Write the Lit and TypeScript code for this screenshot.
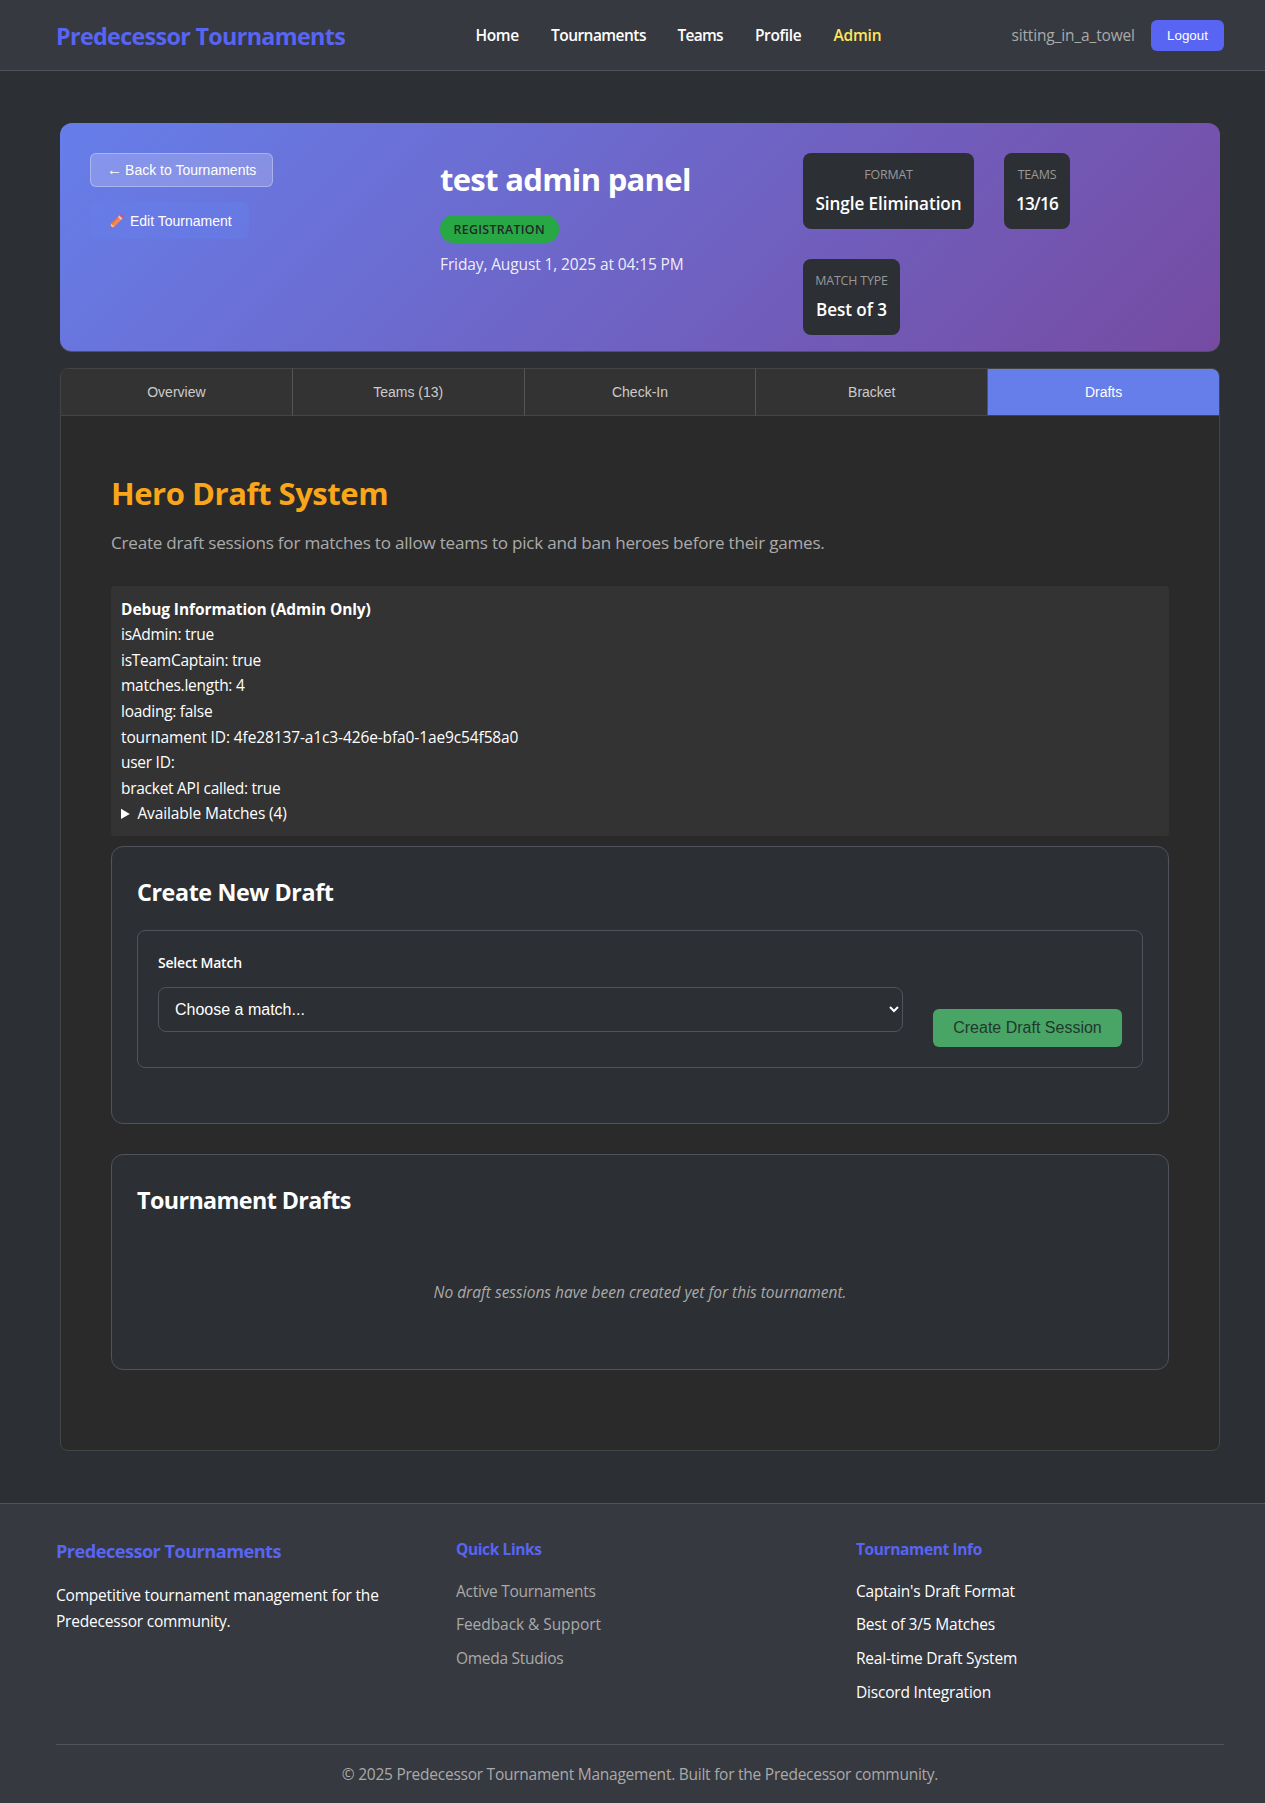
import { LitElement, html, css } from "lit";
import { customElement, state } from "lit/decorators.js";

const base = css`
  * { box-sizing: border-box; }
  :host {
    display: block;
    font-family: "Open Sans", "Noto Sans", sans-serif;
    font-size: 15.5px;
    line-height: 25.6px;
    color: #fff;
  }
  h1, h2, h3, h4, p, ul { margin: 0; padding: 0; }
  button, select { font-family: "Liberation Sans", Arial, sans-serif; }
`;

@customElement("site-header")
class SiteHeader extends LitElement {
  static styles = [base, css`
    .bar {
      height: 71px;
      padding-left: 56px;
      background: #36393f;
      border-bottom: 1px solid #4f545c;
      display: flex;
      align-items: center;
    }
    .brand { width: 419.5px; font-size: 23.3px; font-weight: 700; letter-spacing: -0.66px; color: #5865f2; line-height: 38px; padding-top: 1px; }
    .nav { display: flex; width: 536px; font-weight: 600; padding-top: 2px; }
    .nav a { white-space: nowrap; }
    .home { width: 75.5px; letter-spacing: -0.4px; }
    .tournaments { width: 126.6px; letter-spacing: -0.54px; }
    .teams { width: 77.3px; letter-spacing: -0.75px; }
    .profile { width: 78.5px; letter-spacing: -0.34px; }
    .admin { letter-spacing: -0.18px; color: #fee75c; }
    .user { width: 139.5px; padding-top: 2px; color: #aaa; letter-spacing: -0.15px; }
    .logout {
      width: 73px; height: 31px; margin-top: 1px; padding: 0; border: 0; border-radius: 6px;
      background: #5865f2; color: #fff; font-size: 13.333px; font-weight: 500;
    }
  `];
  render() {
    return html`<header class="bar">
      <div class="brand">Predecessor Tournaments</div>
      <nav class="nav">
        ${["Home", "Tournaments", "Teams", "Profile", "Admin"].map(n => html`<a class=${n.toLowerCase()}>${n}</a>`)}
      </nav>
      <span class="user">sitting_in_a_towel</span>
      <button class="logout">Logout</button>
    </header>`;
  }
}

@customElement("tournament-banner")
class TournamentBanner extends LitElement {
  static styles = [base, css`
    .banner {
      height: 229px;
      padding: 30px;
      border-radius: 12px;
      border-bottom: 1px solid #4f545c;
      background: linear-gradient(135deg, #667eea 0%, #764ba2 100%);
      display: grid;
      grid-template-columns: 350px 363px 387px;
    }
    .actions { display: flex; flex-direction: column; align-items: flex-start; gap: 15px; }
    .actions button { font-size: 14px; color: #fff; border-radius: 6px; padding: 0; white-space: nowrap; }
    .back { width: 183px; height: 34px; background: rgba(255,255,255,.2); border: 1px solid rgba(255,255,255,.3); }
    .arrow { font-size: 15.5px; line-height: 14px; margin-right: -1px; }
    .edit { width: 159px; height: 37px; border: 0; background: rgba(102,126,234,.5); display: flex; align-items: center; }
    .edit svg { width: 14px; height: 14px; margin: 0 6px 0 20px; }
    .title { font-size: 31px; line-height: 51px; letter-spacing: -0.7px; padding-top: 1px; }
    .badge {
      display: block; width: 118.5px; height: 28px; margin-top: 10px; border-radius: 14px; background: #28a745;
      color: #23272a; font-size: 12.4px; font-weight: 600; letter-spacing: .3px; line-height: 29px; text-align: center;
    }
    .date { margin-top: 9px; letter-spacing: -0.12px; color: rgba(255,255,255,.9); }
    .stats { display: flex; flex-wrap: wrap; gap: 30px; align-content: flex-start; }
    .stat { height: 76px; padding-top: 12px; border-radius: 8px; background: #2c2f33; text-align: center; }
    .label { font-size: 12.4px; line-height: 20.5px; letter-spacing: -0.15px; color: #999; }
    .value { margin-top: 4px; font-size: 17.1px; line-height: 28px; font-weight: 600; letter-spacing: -0.07px; }
    .format { width: 171px; }
    .teams { width: 66px; }
    .teams .value { letter-spacing: -0.75px; }
    .match { width: 97px; }
  `];
  render() {
    const stats = [
      ["format", "FORMAT", "Single Elimination"],
      ["teams", "TEAMS", "13/16"],
      ["match", "MATCH TYPE", "Best of 3"],
    ];
    return html`<section class="banner">
      <div class="actions">
        <button class="back"><span class="arrow">←</span> Back to Tournaments</button>
        <button class="edit">
          <svg viewBox="0 0 14 14">
            <path d="M0.3 13.7 1.2 9.8 8.4 2.6 11.4 5.6 4.2 12.8Z" fill="#ff8747"/>
            <path d="M1.2 9.8 8.4 2.6 9.4 3.6 2.2 10.8Z" fill="#f4703c"/>
            <path d="M0.3 13.7 1.2 9.8 4.2 12.8Z" fill="#f9c29a"/>
            <path d="M0.3 13.7 0.7 12 2 13.3Z" fill="#333"/>
            <path d="M8 3 9.7 1.3 12.7 4.3 11 6Z" fill="#cfc9dc"/>
            <path d="M9.5 1.5 10.5.5Q11.2 0 11.9.5L13.5 2.1Q14 2.8 13.5 3.5L12.5 4.5Z" fill="#f8455b"/>
          </svg>
          <span>Edit Tournament</span>
        </button>
      </div>
      <div>
        <h1 class="title">test admin panel</h1>
        <span class="badge">REGISTRATION</span>
        <p class="date">Friday, August 1, 2025 at 04:15 PM</p>
      </div>
      <div class="stats">
        ${stats.map(([c, l, v]) => html`<div class="stat ${c}"><div class="label">${l}</div><div class="value">${v}</div></div>`)}
      </div>
    </section>`;
  }
}

@customElement("draft-panel")
class DraftPanel extends LitElement {
  static styles = [base, css`
    .title { font-size: 31px; line-height: 51px; letter-spacing: -0.46px; color: #faa61a; }
    .lead { margin-top: 10px; font-size: 17.1px; line-height: 28px; letter-spacing: -0.23px; color: #aaa; }
    .debug { margin-top: 29px; height: 250px; padding: 10.7px 10px 9px; border-radius: 4px; background: #333; letter-spacing: -0.27px; }
    .debug strong { letter-spacing: -0.09px; }
    .debug .long { letter-spacing: -0.12px; }
    summary { cursor: pointer; letter-spacing: -0.12px; }
    .card { border: 1px solid #4f545c; border-radius: 12px; background: #2c2f33; padding: 25px; }
    .create { margin-top: 10px; height: 278px; }
    .list { margin-top: 30px; height: 216px; }
    .heading { font-size: 23.3px; line-height: 38px; letter-spacing: -0.4px; padding-top: 1px; }
    .list .heading { letter-spacing: -0.6px; }
    .form { margin-top: 19px; height: 138px; padding: 20px; border: 1px solid #4f545c; border-radius: 8px; display: flex; gap: 30px; }
    .field { flex: 1; display: flex; flex-direction: column; }
    .field label { font-size: 14px; font-weight: 600; line-height: 23px; letter-spacing: -0.2px; }
    select {
      width: 745px; height: 45px; margin-top: 13px; padding: 0 0 0 12px; border: 1px solid #4f545c; border-radius: 8px;
      background: #2c2f33; color: #fff; font-size: 16px;
    }
    .submit {
      width: 189px; height: 38px; margin-top: 58px; padding: 0; border: 0; border-radius: 6px;
      background: #48a565; color: #22382d; font-size: 16px;
    }
    .empty { margin-top: 61px; text-align: center; font-style: italic; color: #aaa; }
  `];
  render() {
    const debug = [
      "isAdmin: true", "isTeamCaptain: true", "matches.length: 4", "loading: false",
      "tournament ID: 4fe28137-a1c3-426e-bfa0-1ae9c54f58a0", "user ID:", "bracket API called: true",
    ];
    return html`
      <h2 class="title">Hero Draft System</h2>
      <p class="lead">Create draft sessions for matches to allow teams to pick and ban heroes before their games.</p>
      <div class="debug">
        <strong>Debug Information (Admin Only)</strong>
        ${debug.map(line => html`<div class=${line.length > 30 ? "long" : "line"}>${line}</div>`)}
        <details><summary>Available Matches (4)</summary></details>
      </div>
      <section class="card create">
        <h3 class="heading">Create New Draft</h3>
        <div class="form">
          <div class="field">
            <label>Select Match</label>
            <select><option>Choose a match...</option></select>
          </div>
          <button class="submit">Create Draft Session</button>
        </div>
      </section>
      <section class="card list">
        <h3 class="heading">Tournament Drafts</h3>
        <p class="empty">No draft sessions have been created yet for this tournament.</p>
      </section>`;
  }
}

@customElement("site-footer")
class SiteFooter extends LitElement {
  static styles = [base, css`
    .footer { height: 300px; padding: 32px 0 0 56px; background: #36393f; border-top: 1px solid #4f545c; }
    .columns { width: 1168px; height: 208px; display: grid; grid-template-columns: repeat(3, 1fr); column-gap: 32px; }
    h3, h4 { color: #5865f2; }
    h3 { font-size: 18.2px; line-height: 30px; letter-spacing: -0.55px; }
    .about { margin-top: 17px; max-width: 345px; letter-spacing: -0.2px; }
    h4 { font-size: 15.5px; letter-spacing: -0.38px; margin-bottom: 16px; padding-top: 1px; }
    ul { list-style: none; }
    li { height: 33.8px; letter-spacing: -0.2px; }
    .links li { color: #aaa; letter-spacing: -0.06px; }
    .links li:nth-child(odd) { letter-spacing: -0.27px; }
    .legal { width: 1168px; border-top: 1px solid #4f545c; padding-top: 17px; text-align: center; color: #aaa; letter-spacing: -0.25px; }
  `];
  render() {
    return html`<footer class="footer">
      <div class="columns">
        <div>
          <h3>Predecessor Tournaments</h3>
          <p class="about">Competitive tournament management for the Predecessor community.</p>
        </div>
        <div class="links">
          <h4>Quick Links</h4>
          <ul>${["Active Tournaments", "Feedback & Support", "Omeda Studios"].map(t => html`<li>${t}</li>`)}</ul>
        </div>
        <div>
          <h4>Tournament Info</h4>
          <ul>${["Captain's Draft Format", "Best of 3/5 Matches", "Real-time Draft System", "Discord Integration"].map(t => html`<li>${t}</li>`)}</ul>
        </div>
      </div>
      <p class="legal">© 2025 Predecessor Tournament Management. Built for the Predecessor community.</p>
    </footer>`;
  }
}

@customElement("app-root")
class AppRoot extends LitElement {
  @state() private active = "Drafts";
  static styles = [base, css`
    :host { background: #2c2f33; height: 1803px; overflow: hidden; }
    .main { width: 1160px; margin: 52px 0 52px 60px; }
    .panel { margin-top: 16px; height: 1083px; border: 1px solid #444; border-radius: 8px; background: #2a2a2a; overflow: hidden; }
    .tabs { display: flex; height: 47px; border-bottom: 1px solid #444; background: #333; }
    .tab { flex: 1; padding: 0; border: 0; border-right: 1px solid #555; background: none; color: #ccc; font-size: 14px; }
    .tab:last-child { border-right: 0; }
    .tab.on { background: #667eea; color: #fff; }
    .body { padding: 52px 50px; }
  `];
  render() {
    const tabs = ["Overview", "Teams (13)", "Check-In", "Bracket", "Drafts"];
    return html`
      <site-header></site-header>
      <main class="main">
        <tournament-banner></tournament-banner>
        <div class="panel">
          <div class="tabs">
            ${tabs.map(t => html`<button class="tab ${t === this.active ? "on" : ""}" @click=${() => (this.active = t)}>${t}</button>`)}
          </div>
          <div class="body"><draft-panel></draft-panel></div>
        </div>
      </main>
      <site-footer></site-footer>`;
  }
}
